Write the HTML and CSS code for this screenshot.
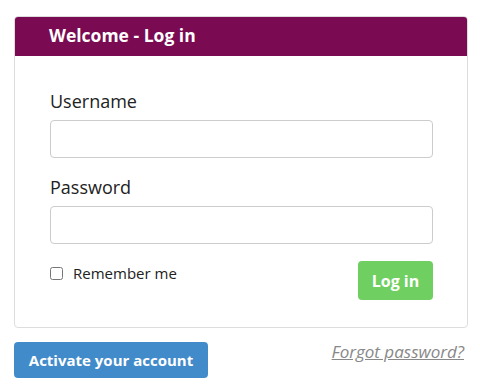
FILE: index.html
```html
<!DOCTYPE html>
<html lang="en">
<head>
  <meta charset="UTF-8">
  <meta name="viewport" content="width=device-width, initial-scale=1.0">
  <title>Welcome - Log in</title>
  <link rel="stylesheet" href="styles.css">
</head>
<body>
  <div class="container">
    <div class="panel">
      <div class="panel-heading">Welcome - Log in</div>
      <div class="panel-body">
        <div class="form-group">
          <label for="username">Username</label>
          <input type="text" id="username">
        </div>
        <div class="form-group">
          <label for="password">Password</label>
          <input type="password" id="password">
        </div>
        <div class="form-actions">
          <label class="remember"><input type="checkbox" id="remember"> Remember me</label>
          <button class="button button-green">Log in</button>
        </div>
      </div>
    </div>

    <div class="links">
      <button class="button button-blue">Activate your account</button>
      <a href="#" class="forgot">Forgot password?</a>
    </div>
  </div>
</body>
</html>
```

FILE: styles.css
```css
body {
  font-family: "Open Sans", Arial, sans-serif;
  background-color: #fff;
  color: #222;
  margin: 0;
  padding: 16px 12px 0 14px;
}

.container {
  width: 454px;
}

.panel {
  border: 1px solid #ddd;
  border-radius: 4px;
  background-color: #fff;
}

.panel-heading {
  background-color: #7a0a52;
  color: #fff;
  font-weight: bold;
  font-size: 17.5px;
  height: 39px;
  line-height: 37px;
  padding-left: 34px;
  border-radius: 3px 3px 0 0;
}

.panel-body {
  padding: 33px 34px 27px 35px;
}

.form-group {
  margin-bottom: 17px;
}

.form-group label {
  display: block;
  font-size: 18px;
  line-height: 24px;
  margin-bottom: 7px;
}

input[type="text"], input[type="password"] {
  display: block;
  box-sizing: border-box;
  width: 383px;
  height: 38px;
  border: 1px solid #ccc;
  border-radius: 4px;
  margin: 0;
}

.form-actions {
  display: flex;
  justify-content: space-between;
  align-items: flex-start;
  margin-top: 0;
}

.remember {
  display: flex;
  align-items: center;
  font-size: 15px;
  margin-top: 2px;
}

.remember input {
  width: 13px;
  height: 13px;
  margin: 0 10px 0 0;
}

.button {
  font-family: "Open Sans", Arial, sans-serif;
  font-weight: bold;
  color: #fff;
  border: none;
  border-radius: 4px;
  cursor: pointer;
}

.button-green {
  background-color: #6fcf60;
  font-size: 16px;
  width: 75px;
  height: 39px;
}

.button-blue {
  background-color: #428bca;
  font-size: 15px;
  width: 194px;
  height: 36px;
}

.links {
  display: flex;
  justify-content: space-between;
  align-items: flex-start;
  margin-top: 14px;
}

.forgot {
  font-size: 17px;
  font-style: italic;
  color: #888;
  margin-right: 4px;
  line-height: 20px;
}
```
